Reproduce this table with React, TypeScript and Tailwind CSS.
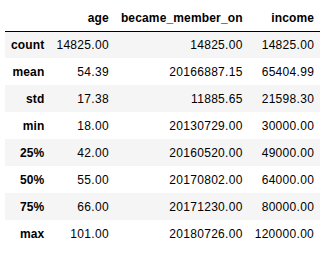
const COLUMNS = ["age", "became_member_on", "income"];

const ROWS: [string, string[]][] = [
  ["count", ["14825.00", "14825.00", "14825.00"]],
  ["mean", ["54.39", "20166887.15", "65404.99"]],
  ["std", ["17.38", "11885.65", "21598.30"]],
  ["min", ["18.00", "20130729.00", "30000.00"]],
  ["25%", ["42.00", "20160520.00", "49000.00"]],
  ["50%", ["55.00", "20170802.00", "64000.00"]],
  ["75%", ["66.00", "20171230.00", "80000.00"]],
  ["max", ["101.00", "20180726.00", "120000.00"]],
];

export default function App() {
  return (
    <div className="w-[336px] h-[253px] bg-white pl-[5px] pt-[5px] font-['Liberation_Sans',Arial,sans-serif] text-[12px] text-black">
      <table className="border-collapse">
        <thead className="border-b border-black">
          <tr>
            <th className="px-[6px] h-[26px] leading-[14px]" />
            {COLUMNS.map((c) => (
              <th key={c} className="px-[6px] h-[26px] leading-[14px] text-right font-bold tracking-[0.15px]">
                {c}
              </th>
            ))}
          </tr>
        </thead>
        <tbody>
          {ROWS.map(([label, vals], i) => (
            <tr key={label} className={i % 2 === 0 ? "bg-[#f5f5f5]" : "bg-white"}>
              <th className="px-[6px] h-[27px] leading-[14px] text-right font-bold tracking-[0.15px]">{label}</th>
              {vals.map((v, j) => (
                <td key={j} className="px-[6px] h-[27px] leading-[14px] text-right tracking-[0.3px]">
                  {v}
                </td>
              ))}
            </tr>
          ))}
        </tbody>
      </table>
    </div>
  );
}
